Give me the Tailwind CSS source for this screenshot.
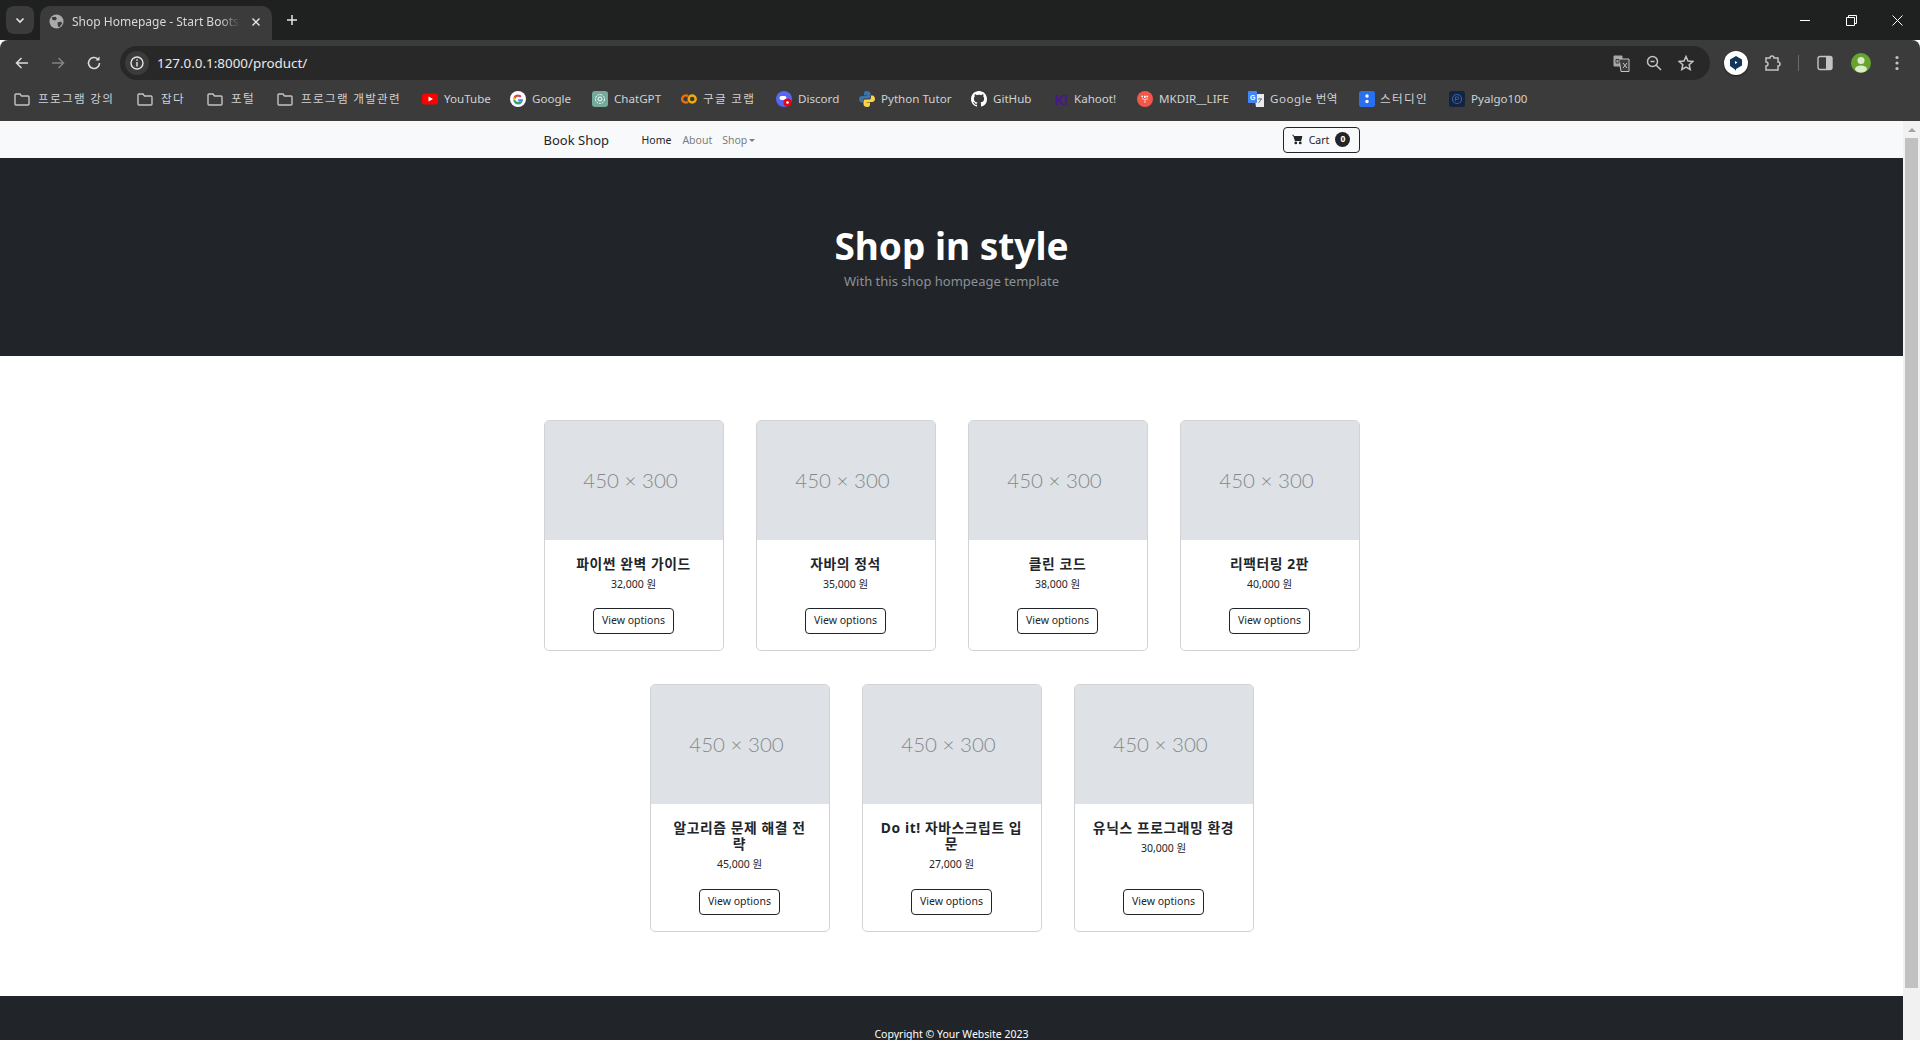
<!DOCTYPE html>
<html lang="ko"><head><meta charset="utf-8"><title>Shop Homepage</title>
<script src="https://cdn.jsdelivr.net/npm/@tailwindcss/browser@4"></script></head>
<body class="h-[1040px] w-[1920px] overflow-hidden bg-white font-['Noto_Sans','Noto_Sans_CJK_KR',sans-serif]">
<div class="flex h-[40px] items-start bg-[#1f2020] pl-[6px] text-[#dcdcdc]">
  <div class="mt-[6px] flex h-[28px] w-[28px] items-center justify-center rounded-[8px] bg-[#3b3b3b]"><svg width="12" height="12" viewBox="0 0 12 12" fill="none" stroke="#e6e6e6" stroke-width="1.6"><path d="M2.5 4.5 6 8l3.5-3.5"/></svg></div>
  <div class="ml-[6px] mt-[6px] flex h-[34px] w-[232px] items-center rounded-t-[10px] bg-[#3b3b3b] pb-[3px] pl-[9px]">
    <svg width="15" height="15" viewBox="0 0 16 16"><circle cx="8" cy="8" r="7.5" fill="#a9aaab"/><path d="M3 3.5 7 3l1.5 2-2 2-3-1zM9 9l4-1 1 2-3 4-1.5-1z" fill="#3b3b3b"/></svg>
    <span class="ml-[8px] w-[168px] overflow-hidden whitespace-nowrap text-[12px] leading-[18px] text-[#d8d8d8] [mask-image:linear-gradient(to_left,transparent,black_20px)]">Shop Homepage - Start Bootstrap</span>
    <svg class="ml-[11px]" width="10" height="10" viewBox="0 0 10 10" stroke="#e6e6e6" stroke-width="1.4"><path d="M1.5 1.5l7 7M8.5 1.5l-7 7"/></svg>
  </div>
  <svg class="ml-[14px] mt-[14px]" width="12" height="12" viewBox="0 0 12 12" stroke="#e6e6e6" stroke-width="1.5"><path d="M6 1v10M1 6h10"/></svg>
  <div class="ml-auto flex items-center">
    <div class="flex h-[40px] w-[46px] items-center justify-center"><svg width="11" height="11" viewBox="0 0 11 11" stroke="#fff"><path d="M0 5.5h10"/></svg></div>
    <div class="flex h-[40px] w-[46px] items-center justify-center"><svg width="11" height="11" viewBox="0 0 11 11" fill="none" stroke="#fff"><path d="M.5 2.5h8v8h-8zM2.5 2.5v-2h8v8h-2"/></svg></div>
    <div class="flex h-[40px] w-[46px] items-center justify-center"><svg width="11" height="11" viewBox="0 0 11 11" stroke="#fff"><path d="M.5.5l10 10M10.500.5l-10 10"/></svg></div>
  </div>
</div>
<div class="rounded-t-[8px] bg-[#3b3b3b]">
  <div class="flex h-[46px] items-center pl-[14px]">
    <svg width="16" height="16" viewBox="0 0 16 16" fill="none" stroke="#dcdcdc" stroke-width="1.5"><path d="M14 8H3M7.5 3 2.5 8l5 5"/></svg>
    <svg class="ml-[20px]" width="16" height="16" viewBox="0 0 16 16" fill="none" stroke="#838383" stroke-width="1.5"><path d="M2 8h11M8.500 3l5 5-5 5"/></svg>
    <svg class="ml-[20px]" width="16" height="16" viewBox="0 0 16 16" fill="none" stroke="#dcdcdc" stroke-width="1.6"><path d="M13.5 8a5.500 5.500 0 1 1-1.700-4"/><path d="M13.5 1.500v4h-4" fill="#dcdcdc" stroke="none"/></svg>
    <div class="ml-[18px] flex h-[34px] w-[1590px] items-center rounded-full bg-[#282828] pl-[5px] pr-[16px]">
      <div class="flex h-[24px] w-[24px] items-center justify-center rounded-full bg-[#3b3b3b]"><svg width="14" height="14" viewBox="0 0 14 14" fill="none" stroke="#e4e4e4" stroke-width="1.4"><circle cx="7" cy="7" r="6"/><path d="M7 6v4.500M7 3.200v1.500"/></svg></div>
      <span class="ml-[8px] text-[13.4px] leading-[18px] text-[#e8eaed]">127.0.0.1:8000/product/</span>
      <div class="ml-auto flex items-center gap-[16px]">
        <svg width="17" height="17" viewBox="0 0 17 17"><rect x="0.5" y="0.5" width="9" height="11" rx="1" fill="#a8a8a8"/><path d="M6 4h10v12.500H8z" fill="#3b3b3b" stroke="#c4c4c4"/><path d="M3 4.500h3v3.500H3z" stroke="#3b3b3b" fill="none"/><path d="M10 8l4 5M14 8l-4 5" stroke="#c4c4c4" fill="none"/></svg>
        <svg width="16" height="16" viewBox="0 0 16 16" fill="none" stroke="#c4c4c4" stroke-width="1.5"><circle cx="6.5" cy="6.5" r="5"/><path d="M10 10l5 5M4.500 6.500h4"/></svg>
        <svg width="16" height="16" viewBox="0 0 16 16" fill="none" stroke="#c4c4c4" stroke-width="1.5"><path d="M8 1.500l2 4.500 4.800.5-3.600 3.200 1 4.800L8 12l-4.200 2.500 1-4.800L1.200 6.500 6 6z"/></svg>
      </div>
    </div>
    <div class="ml-[14px] flex h-[24px] w-[24px] items-center justify-center rounded-full bg-white shadow-[0_1px_2px_rgba(0,0,0,.5)]"><svg width="14" height="15" viewBox="0 0 14 15"><path d="M7 0l6 3.500v6L7 13v2l-1-1.500L1 10V3.500z" fill="#15365c"/><path d="M6 5l2.500 1.500L6 8z" fill="#fff"/></svg></div>
    <svg class="ml-[16px]" width="17" height="17" viewBox="0 0 17 17" fill="none" stroke="#c4c4c4" stroke-width="1.5"><path d="M2 3h4a2 2 0 0 1 4 0h4v4a2 2 0 0 1 0 4v4H2v-4a2 2 0 0 0 0-4z"/></svg>
    <div class="ml-[17px] h-[16px] w-px bg-[#6a6a6a]"></div>
    <svg class="ml-[18px]" width="16" height="16" viewBox="0 0 16 16"><rect x="1" y="1.500" width="14" height="13" rx="2" fill="none" stroke="#c4c4c4" stroke-width="1.4"/><rect x="9" y="2" width="6" height="12" fill="#c4c4c4"/></svg>
    <svg class="ml-[18px]" width="20" height="20" viewBox="0 0 20 20"><circle cx="10" cy="10" r="10" fill="#67a42f"/><circle cx="10" cy="7.500" r="3.500" fill="#dcecc9"/><ellipse cx="10" cy="16" rx="6" ry="3.500" fill="#dcecc9"/></svg>
    <svg class="ml-[24px]" width="4" height="16" viewBox="0 0 4 16" fill="#c4c4c4"><circle cx="2" cy="2.500" r="1.600"/><circle cx="2" cy="8" r="1.600"/><circle cx="2" cy="13.500" r="1.600"/></svg>
  </div>
  <div class="flex h-[35px] items-center pb-[9px] pl-[14px] text-[11.600px] leading-[16px] text-[#d0d2d4]">
    <div class="flex w-[123px] items-center gap-[8px]"><svg width="16" height="14" viewBox="0 0 16 14" fill="none" stroke="#c4c4c4" stroke-width="1.4"><path d="M1 3a1 1 0 0 1 1-1h4l1.500 2H14a1 1 0 0 1 1 1v7a1 1 0 0 1-1 1H2a1 1 0 0 1-1-1z"/></svg><span class="tracking-[1.300px]">프로그램 강의</span></div>
    <div class="flex w-[70px] items-center gap-[8px]"><svg width="16" height="14" viewBox="0 0 16 14" fill="none" stroke="#c4c4c4" stroke-width="1.4"><path d="M1 3a1 1 0 0 1 1-1h4l1.500 2H14a1 1 0 0 1 1 1v7a1 1 0 0 1-1 1H2a1 1 0 0 1-1-1z"/></svg><span class="tracking-[1.300px]">잡다</span></div>
    <div class="flex w-[70px] items-center gap-[8px]"><svg width="16" height="14" viewBox="0 0 16 14" fill="none" stroke="#c4c4c4" stroke-width="1.4"><path d="M1 3a1 1 0 0 1 1-1h4l1.500 2H14a1 1 0 0 1 1 1v7a1 1 0 0 1-1 1H2a1 1 0 0 1-1-1z"/></svg><span class="tracking-[1.300px]">포털</span></div>
    <div class="flex w-[145px] items-center gap-[8px]"><svg width="16" height="14" viewBox="0 0 16 14" fill="none" stroke="#c4c4c4" stroke-width="1.4"><path d="M1 3a1 1 0 0 1 1-1h4l1.500 2H14a1 1 0 0 1 1 1v7a1 1 0 0 1-1 1H2a1 1 0 0 1-1-1z"/></svg><span class="tracking-[1.300px]">프로그램 개발관련</span></div>
    <div class="flex w-[88px] items-center gap-[6px]"><svg width="16" height="12" viewBox="0 0 16 12"><rect width="16" height="11" y="0.5" rx="3" fill="#f00"/><path d="M6.500 3.500 11 6l-4.500 2.500z" fill="#fff"/></svg><span>YouTube</span></div>
    <div class="flex w-[82px] items-center gap-[6px]"><svg width="16" height="16" viewBox="0 0 16 16"><circle cx="8" cy="8" r="8" fill="#fff"/><path d="M13 8.200H8.200V10h2.700a3 3 0 1 1-.8-3.600l1.300-1.300A4.800 4.800 0 1 0 13 8.200z" fill="#4285f4"/><path d="M3.500 6a4.800 4.800 0 0 1 7.900-.9l-1.300 1.300A3 3 0 0 0 5.200 7z" fill="#ea4335"/><path d="M3.500 6 5.200 7a3 3 0 0 0 0 2l-1.700 1a4.800 4.800 0 0 1 0-4z" fill="#fbbc05"/><path d="M3.500 10 5.200 9a3 3 0 0 0 4.800 1l1.400 1.200A4.800 4.800 0 0 1 3.500 10z" fill="#34a853"/></svg><span>Google</span></div>
    <div class="flex w-[89px] items-center gap-[6px]"><svg width="16" height="16" viewBox="0 0 16 16"><rect width="16" height="16" rx="3" fill="#74aa9c"/><circle cx="8" cy="8" r="4.500" fill="none" stroke="#fff" stroke-dasharray="2 1"/><circle cx="8" cy="8" r="2" fill="none" stroke="#fff"/></svg><span>ChatGPT</span></div>
    <div class="flex w-[95px] items-center gap-[6px]"><svg width="16" height="10" viewBox="0 0 16 10" fill="none" stroke-width="2.4"><path d="M7 2.400a3.500 3.500 0 1 0 0 5.200" stroke="#e8710a"/><circle cx="11.200" cy="5" r="3.500" stroke="#f9ab00"/></svg><span class="tracking-[1.300px]">구글 코랩</span></div>
    <div class="flex w-[83px] items-center gap-[6px]"><svg width="16" height="16" viewBox="0 0 16 16"><circle cx="8" cy="8" r="8" fill="#5865f2"/><rect x="3.500" y="5" width="7" height="4" rx="2" fill="#fff"/><circle cx="11.500" cy="11.500" r="4" fill="#e30613"/><circle cx="11.500" cy="11.500" r="1.300" fill="#fff"/></svg><span>Discord</span></div>
    <div class="flex w-[112px] items-center gap-[6px]"><svg width="16" height="16" viewBox="0 0 16 16"><path d="M8 0C5 0 5 1.500 5 3v1.500h3.500V5H3C1 5 0 6.500 0 8s1 3.500 2.500 3.500H4V9.500C4 8 5 7.500 6 7.500h4c1 0 1.500-1 1.500-2V3C11.500 1 10 0 8 0z" fill="#3a75a8"/><path d="M8 16c3 0 3-1.500 3-3v-1.500H7.500V11H13c2 0 3-1.500 3-3s-1-3.500-2.500-3.500H12v2c0 1.500-1 2-2 2H6c-1 0-1.500 1-1.500 2V13c0 2 1.500 3 3.500 3z" fill="#ffd343"/></svg><span>Python Tutor</span></div>
    <div class="flex w-[82px] items-center gap-[6px]"><svg width="16" height="16" viewBox="0 0 16 16" fill="#fff"><path d="M8 0C3.580 0 0 3.580 0 8c0 3.540 2.290 6.530 5.470 7.590.4.070.55-.17.55-.38 0-.19-.01-.82-.01-1.490-2.010.37-2.530-.49-2.690-.94-.09-.23-.48-.94-.82-1.130-.28-.15-.68-.52-.01-.53.63-.01 1.080.58 1.230.82.720 1.210 1.870.87 2.330.66.070-.52.280-.87.510-1.070-1.780-.2-3.640-.89-3.640-3.950 0-.87.310-1.590.820-2.150-.08-.2-.36-1.020.08-2.120 0 0 .67-.21 2.200.82.640-.18 1.320-.27 2-.27s1.360.09 2 .27c1.530-1.040 2.200-.82 2.200-.82.440 1.100.16 1.920.08 2.120.510.560.820 1.270.820 2.150 0 3.070-1.870 3.750-3.650 3.950.290.250.540.730.540 1.480 0 1.070-.01 1.930-.01 2.200 0 .21.150.460.550.380A8 8 0 0 0 16 8c0-4.420-3.580-8-8-8z"/></svg><span>GitHub</span></div>
    <div class="flex w-[84px] items-center gap-[5px]"><span class="flex w-[16px] justify-center text-[15px] font-bold leading-[16px] text-[#46178f]">K!</span><span>Kahoot!</span></div>
    <div class="flex w-[111px] items-center gap-[6px]"><svg width="16" height="16" viewBox="0 0 16 16"><circle cx="8" cy="8" r="8" fill="#f5564a"/><path d="M4.500 5.500h7M8 5.500v6M5.500 8h1M9.500 8h1" stroke="#fff" stroke-width="1.5" stroke-dasharray="1.500 1"/></svg><span>MKDIR__LIFE</span></div>
    <div class="flex w-[111px] items-center gap-[6px]"><svg width="16" height="16" viewBox="0 0 16 16"><path d="M6 3h10v13H8z" fill="#e8eaed"/><rect width="9" height="12" rx="1" fill="#4285f4"/><path d="M10 8h4M12 7v1M10.500 12l3-4" stroke="#777" fill="none"/><text x="2" y="8.500" font-size="7" font-weight="700" fill="#fff" font-family="Liberation Sans">G</text></svg><span class="tracking-[.5px]">Google 번역</span></div>
    <div class="flex w-[90px] items-center gap-[5px]"><svg width="16" height="16" viewBox="0 0 16 16"><rect width="16" height="16" rx="2.500" fill="#2a6ff0"/><circle cx="8" cy="5" r="1.700" fill="#fff"/><circle cx="8" cy="10.500" r="1.700" fill="#fff"/></svg><span class="tracking-[1.300px]">스터디인</span></div>
    <div class="flex items-center gap-[6px]"><svg width="16" height="16" viewBox="0 0 16 16" fill="none"><rect width="16" height="16" rx="2.500" fill="#16233d"/><circle cx="8" cy="8" r="4.500" stroke="#2f62b8" stroke-width="1.2"/><path d="M6.500 10V6h2a1 1 0 0 1 0 2.500h-2" stroke="#2f62b8"/></svg><span>Pyalgo100</span></div>
  </div>
</div>
<div class="flex h-[919px]">
  <div class="w-[1903px] min-w-0 overflow-hidden">
    <nav class="flex h-[37px] justify-center bg-[#f8f9fa] text-[#212529]">
      <div class="flex w-[816px] items-center">
        <span class="w-[98px] text-[13px] leading-[18px]">Book Shop</span>
        <span class="text-[10.500px] leading-[14px]">Home</span>
        <span class="ml-[11px] text-[10.500px] leading-[14px] text-[#7a7c7f]">About</span>
        <span class="ml-[10px] text-[10.500px] leading-[14px] text-[#7a7c7f]">Shop</span>
        <span class="ml-[2px] mt-[1px] h-0 w-0 border-x-[3px] border-t-[3px] border-x-transparent border-t-[#7a7c7f]"></span>
        <div class="ml-auto flex h-[26px] w-[77px] items-center justify-center rounded-[4px] border border-[#212529]">
          <svg width="11" height="11" viewBox="0 0 16 16" fill="#212529"><path d="M0 1.500A.5.5 0 0 1 .5 1H2a.5.5 0 0 1 .49.4L2.890 3H14.500a.5.5 0 0 1 .49.6l-1.500 6a.5.5 0 0 1-.49.4H4.500a.5.5 0 0 1-.49-.4L1.610 2H.5a.5.5 0 0 1-.5-.5z"/><circle cx="5.500" cy="13" r="2"/><circle cx="12" cy="13" r="2"/></svg>
          <span class="ml-[6px] text-[10.500px] leading-[14px]">Cart</span>
          <span class="ml-[6px] flex h-[15px] w-[15px] items-center justify-center rounded-full bg-[#212529] text-[8.500px] font-bold leading-none text-white">0</span>
        </div>
      </div>
    </nav>
    <header class="flex h-[198px] flex-col items-center bg-[#212529] pt-[65px] text-center">
      <h1 class="text-[37px] font-bold leading-[46px] text-white">Shop in style</h1>
      <p class="mt-[3px] text-[13px] leading-[18px] text-[#8d9196]">With this shop hompeage template</p>
    </header>
    <main class="flex h-[640px] flex-col items-center gap-[33px] pt-[64px]">
      <div class="flex h-[231px] gap-[32px]">
        <article class="flex w-[180px] flex-col overflow-hidden rounded-[5px] border border-[#d2d3d5]"><div class="flex h-[119px] shrink-0 items-center justify-center bg-[#dee2e6] pr-[6px] font-['Lato'] text-[20.5px] font-light text-[#85898d]">450 × 300</div><div class="flex flex-1 flex-col items-center px-[17px] pt-[16px] pb-[16px] text-center"><h5 class="text-[13.8px] font-bold leading-[16px] tracking-[.6px] text-[#212529]">파이썬 완벽 가이드</h5><p class="mt-[5px] text-[10.500px] leading-[14px] text-[#212529]">32,000 원</p><a class="mt-auto flex h-[26px] w-[81px] items-center justify-center rounded-[4px] border border-[#212529] text-[10.500px] text-[#212529]">View options</a></div></article>
        <article class="flex w-[180px] flex-col overflow-hidden rounded-[5px] border border-[#d2d3d5]"><div class="flex h-[119px] shrink-0 items-center justify-center bg-[#dee2e6] pr-[6px] font-['Lato'] text-[20.5px] font-light text-[#85898d]">450 × 300</div><div class="flex flex-1 flex-col items-center px-[17px] pt-[16px] pb-[16px] text-center"><h5 class="text-[13.8px] font-bold leading-[16px] tracking-[.6px] text-[#212529]">자바의 정석</h5><p class="mt-[5px] text-[10.500px] leading-[14px] text-[#212529]">35,000 원</p><a class="mt-auto flex h-[26px] w-[81px] items-center justify-center rounded-[4px] border border-[#212529] text-[10.500px] text-[#212529]">View options</a></div></article>
        <article class="flex w-[180px] flex-col overflow-hidden rounded-[5px] border border-[#d2d3d5]"><div class="flex h-[119px] shrink-0 items-center justify-center bg-[#dee2e6] pr-[6px] font-['Lato'] text-[20.5px] font-light text-[#85898d]">450 × 300</div><div class="flex flex-1 flex-col items-center px-[17px] pt-[16px] pb-[16px] text-center"><h5 class="text-[13.8px] font-bold leading-[16px] tracking-[.6px] text-[#212529]">클린 코드</h5><p class="mt-[5px] text-[10.500px] leading-[14px] text-[#212529]">38,000 원</p><a class="mt-auto flex h-[26px] w-[81px] items-center justify-center rounded-[4px] border border-[#212529] text-[10.500px] text-[#212529]">View options</a></div></article>
        <article class="flex w-[180px] flex-col overflow-hidden rounded-[5px] border border-[#d2d3d5]"><div class="flex h-[119px] shrink-0 items-center justify-center bg-[#dee2e6] pr-[6px] font-['Lato'] text-[20.5px] font-light text-[#85898d]">450 × 300</div><div class="flex flex-1 flex-col items-center px-[17px] pt-[16px] pb-[16px] text-center"><h5 class="text-[13.8px] font-bold leading-[16px] tracking-[.6px] text-[#212529]">리팩터링 2판</h5><p class="mt-[5px] text-[10.500px] leading-[14px] text-[#212529]">40,000 원</p><a class="mt-auto flex h-[26px] w-[81px] items-center justify-center rounded-[4px] border border-[#212529] text-[10.500px] text-[#212529]">View options</a></div></article>
      </div>
      <div class="flex h-[248px] gap-[32px]">
        <article class="flex w-[180px] flex-col overflow-hidden rounded-[5px] border border-[#d2d3d5]"><div class="flex h-[119px] shrink-0 items-center justify-center bg-[#dee2e6] pr-[6px] font-['Lato'] text-[20.5px] font-light text-[#85898d]">450 × 300</div><div class="flex flex-1 flex-col items-center px-[17px] pt-[16px] pb-[16px] text-center"><h5 class="text-[13.8px] font-bold leading-[16px] tracking-[.6px] text-[#212529]">알고리즘 문제 해결 전략</h5><p class="mt-[5px] text-[10.500px] leading-[14px] text-[#212529]">45,000 원</p><a class="mt-auto flex h-[26px] w-[81px] items-center justify-center rounded-[4px] border border-[#212529] text-[10.500px] text-[#212529]">View options</a></div></article>
        <article class="flex w-[180px] flex-col overflow-hidden rounded-[5px] border border-[#d2d3d5]"><div class="flex h-[119px] shrink-0 items-center justify-center bg-[#dee2e6] pr-[6px] font-['Lato'] text-[20.5px] font-light text-[#85898d]">450 × 300</div><div class="flex flex-1 flex-col items-center px-[17px] pt-[16px] pb-[16px] text-center"><h5 class="text-[13.8px] font-bold leading-[16px] tracking-[.6px] text-[#212529]">Do it! 자바스크립트 입문</h5><p class="mt-[5px] text-[10.500px] leading-[14px] text-[#212529]">27,000 원</p><a class="mt-auto flex h-[26px] w-[81px] items-center justify-center rounded-[4px] border border-[#212529] text-[10.500px] text-[#212529]">View options</a></div></article>
        <article class="flex w-[180px] flex-col overflow-hidden rounded-[5px] border border-[#d2d3d5]"><div class="flex h-[119px] shrink-0 items-center justify-center bg-[#dee2e6] pr-[6px] font-['Lato'] text-[20.5px] font-light text-[#85898d]">450 × 300</div><div class="flex flex-1 flex-col items-center px-[17px] pt-[16px] pb-[16px] text-center"><h5 class="text-[13.8px] font-bold leading-[16px] tracking-[.6px] text-[#212529]">유닉스 프로그래밍 환경</h5><p class="mt-[5px] text-[10.500px] leading-[14px] text-[#212529]">30,000 원</p><a class="mt-auto flex h-[26px] w-[81px] items-center justify-center rounded-[4px] border border-[#212529] text-[10.500px] text-[#212529]">View options</a></div></article>
      </div>
    </main>
    <footer class="h-[44px] bg-[#212529] pt-[31px] text-center text-[10.500px] leading-[14px] text-white">Copyright © Your Website 2023</footer>
  </div>
  <div class="flex w-[17px] flex-col bg-[#f1f1f1]">
    <div class="flex h-[17px] items-center justify-center"><span class="h-0 w-0 border-x-[4px] border-b-[4px] border-x-transparent border-b-[#a3a3a3]"></span></div>
    <div class="mx-[2px] h-[850px] bg-[#c1c1c1]"></div>
  </div>
</div>
</body></html>
